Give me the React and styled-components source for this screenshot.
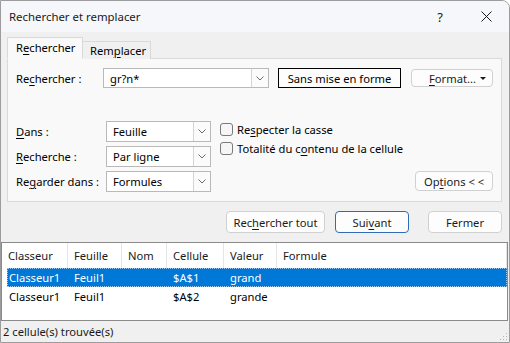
import styled, { createGlobalStyle } from 'styled-components'

const GlobalStyle = createGlobalStyle`
  html, body {
    margin: 0;
    padding: 0;
    background: #ffffff;
  }
  body {
    font-family: "Segoe UI", "Noto Sans", "Open Sans", sans-serif;
    font-size: 11.2px;
    color: #000000;
  }
  * { box-sizing: border-box; }
`

const Window = styled.div`
  width: 510px;
  height: 343px;
  display: flex;
  flex-direction: column;
  border: 1px solid #9c9c9c;
  border-top-right-radius: 8px;
  background: #f0f0f0;
  overflow: hidden;
`

const TitleBar = styled.div`
  height: 31px;
  flex: none;
  display: flex;
  align-items: center;
  padding-left: 8px;
  background: #f5f7fa;
`

const Title = styled.div`
  flex: 1;
  font-size: 11.4px;
  color: #1a1a1a;
`

const TitleButton = styled.div`
  width: 46px;
  height: 31px;
  display: flex;
  align-items: center;
  justify-content: center;
  font-size: 13px;
  color: #1a1a1a;
`

const Content = styled.div`
  padding: 6px 7px 0 6px;
`

const TabStrip = styled.div`
  display: flex;
  align-items: flex-end;
  height: 21px;
  margin-bottom: -1px;
  position: relative;
  z-index: 1;
`

const Tab = styled.div`
  height: ${p => (p.$active ? '22px' : '18px')};
  width: ${p => p.$width}px;
  display: flex;
  align-items: center;
  padding-left: ${p => (p.$active ? '8px' : '7px')};
  border: 1px solid #d9d9d9;
  border-left: ${p => (p.$active ? '1px solid #d9d9d9' : 'none')};
  border-bottom: ${p => (p.$active ? '1px solid #f9f9f9' : 'none')};
  background: ${p => (p.$active ? '#f9f9f9' : '#f0f0f0')};
  padding-bottom: ${p => (p.$active ? '2px' : '0')};
  white-space: nowrap;
`

const Panel = styled.div`
  border: 1px solid #d9d9d9;
  background: #f9f9f9;
  padding: 9px 8px 9px 8px;
`

const FindRow = styled.div`
  display: flex;
  align-items: center;
  height: 20px;
`

const Label = styled.div`
  width: ${p => p.$width || 87}px;
  flex: none;
  white-space: nowrap;
`

const Key = styled.span`
  text-decoration: underline;
  text-underline-offset: 2px;
`

const Text = styled.span`
  white-space: nowrap;
`

const Combo = styled.div`
  width: ${p => p.$width}px;
  height: ${p => p.$height || 21}px;
  flex: none;
  display: flex;
  align-items: stretch;
  background: #ffffff;
  border: 1px solid #b9b9b9;
`

const ComboText = styled.div`
  flex: 1;
  display: flex;
  align-items: center;
  padding-left: 6px;
  overflow: hidden;
  white-space: nowrap;
`

const ComboArrow = styled.div`
  width: 17px;
  flex: none;
  display: flex;
  align-items: center;
  justify-content: center;
  border-left: 1px solid #d4d4d4;
  background: #fbfbfb;
`

const Button = styled.div`
  width: ${p => p.$width}px;
  height: ${p => p.$height || 22}px;
  flex: none;
  display: flex;
  align-items: center;
  justify-content: center;
  background: #fdfdfd;
  border: 1px solid ${p => (p.$focus ? '#2f6cb3' : '#d0d0d0')};
  border-radius: 4px;
  margin-left: ${p => p.$gap || 0}px;
  color: #1a1a1a;
  white-space: nowrap;
`

const PlainButton = styled.div`
  width: 123px;
  height: 20px;
  flex: none;
  margin-left: 9px;
  display: flex;
  align-items: center;
  justify-content: center;
  background: #fdfdfd;
  border: 1px solid #000000;
  white-space: nowrap;
`

const FormatButton = styled(Button)`
  justify-content: flex-start;
  padding-left: 17px;
  position: relative;
`

const DropMark = styled.span`
  position: absolute;
  right: 6px;
  top: 7px;
  width: 0;
  height: 0;
  border-left: 3px solid transparent;
  border-right: 3px solid transparent;
  border-top: 3px solid #1a1a1a;
`

const OptionsArea = styled.div`
  display: flex;
  margin-top: 33px;
`

const OptionGrid = styled.div`
  display: grid;
  grid-template-columns: 90px 105px;
  row-gap: 4px;
  align-items: center;
`

const CheckColumn = styled.div`
  display: flex;
  flex-direction: column;
  margin-left: 9px;
  margin-top: -1px;
`

const CheckRow = styled.div`
  display: flex;
  align-items: center;
  height: 19px;
  white-space: nowrap;
`

const CheckBox = styled.div`
  width: 13px;
  height: 13px;
  flex: none;
  border: 1px solid #7a7a7a;
  border-radius: 3px;
  background: #f6f6f6;
  margin-right: 4px;
`

const OptionsButton = styled(Button)`
  margin-left: auto;
  align-self: flex-end;
  margin-bottom: 1px;
`

const ActionRow = styled.div`
  display: flex;
  justify-content: flex-end;
  margin-top: 9px;
`

const ResultList = styled.div`
  margin: 9px 1px 0 0;
  height: 79px;
  flex: none;
  background: #ffffff;
  border: 1px solid #8a8a8a;
`

const HeaderRow = styled.div`
  display: grid;
  grid-template-columns: 66px 54px 45px 57px 53px 1fr;
  height: 25px;
`

const HeaderCell = styled.div`
  display: flex;
  align-items: center;
  padding-left: 6px;
  border-right: 1px solid #e5e5e5;
  color: #1a1a1a;
`

const DataRow = styled.div`
  display: grid;
  grid-template-columns: 61px 54px 45px 57px 53px 1fr;
  height: ${p => (p.$selected ? 19 : 18)}px;
  margin-left: 5px;
  background: ${p => (p.$selected ? '#0078d7' : 'transparent')};
  color: ${p => (p.$selected ? '#ffffff' : '#000000')};
  outline: ${p => (p.$selected ? '1px dotted #9cc7ee' : 'none')};
  outline-offset: -1px;
`

const DataCell = styled.div`
  display: flex;
  align-items: center;
  padding-left: ${p => (p.$first ? 2 : 6)}px;
  white-space: nowrap;
`

const StatusBar = styled.div`
  flex: 1;
  display: flex;
  align-items: center;
  padding-left: 2px;
  position: relative;
  color: #1a1a1a;
`

const Grip = styled.svg`
  position: absolute;
  right: 1px;
  bottom: 1px;
`

const Chevron = () => (
  <svg width="8" height="5" viewBox="0 0 8 5">
    <path d="M0.5 0.5 L4 4 L7.5 0.5" fill="none" stroke="#6b6b6b" strokeWidth="1" />
  </svg>
)

const CloseIcon = () => (
  <svg width="11" height="11" viewBox="0 0 11 11">
    <path d="M0.5 0.5 L10.5 10.5 M10.5 0.5 L0.5 10.5" stroke="#1a1a1a" strokeWidth="1" />
  </svg>
)

const headers = ['Classeur', 'Feuille', 'Nom', 'Cellule', 'Valeur', 'Formule']

const results = [
  ['Classeur1', 'Feuil1', '', '$A$1', 'grand', ''],
  ['Classeur1', 'Feuil1', '', '$A$2', 'grande', '']
]

const options = [
  { label: <><Key>D</Key>ans :</>, value: 'Feuille' },
  { label: <><Key>R</Key>echerche :</>, value: 'Par ligne' },
  { label: <>Re<Key>g</Key>arder dans :</>, value: 'Formules' }
]

export default function App() {
  return (
    <>
      <GlobalStyle />
      <Window>
        <TitleBar>
          <Title>Rechercher et remplacer</Title>
          <TitleButton>?</TitleButton>
          <TitleButton>
            <CloseIcon />
          </TitleButton>
        </TitleBar>

        <Content>
          <TabStrip>
            <Tab $active $width={76}>
              <Text>R<Key>e</Key>chercher</Text>
            </Tab>
            <Tab $width={68}>
              <Text>Rem<Key>p</Key>lacer</Text>
            </Tab>
          </TabStrip>

          <Panel>
            <FindRow>
              <Label>
                Re<Key>c</Key>hercher :
              </Label>
              <Combo $width={166} $height={20}>
                <ComboText>gr?n*</ComboText>
                <ComboArrow>
                  <Chevron />
                </ComboArrow>
              </Combo>
              <PlainButton>Sans mise en forme</PlainButton>
              <FormatButton $width={82} $height={18} $gap={10}>
                <Text><Key>F</Key>ormat...</Text>
                <DropMark />
              </FormatButton>
            </FindRow>

            <OptionsArea>
              <OptionGrid>
                {options.map((o, i) => [
                  <Label key={'l' + i} $width={90}>
                    {o.label}
                  </Label>,
                  <Combo key={'c' + i} $width={105}>
                    <ComboText>{o.value}</ComboText>
                    <ComboArrow>
                      <Chevron />
                    </ComboArrow>
                  </Combo>
                ])}
              </OptionGrid>

              <CheckColumn>
                <CheckRow>
                  <CheckBox />
                  <Text>Re<Key>s</Key>pecter la casse</Text>
                </CheckRow>
                <CheckRow>
                  <CheckBox />
                  <Text>Totalité du c<Key>o</Key>ntenu de la cellule</Text>
                </CheckRow>
              </CheckColumn>

              <OptionsButton $width={78} $height={20}>
                <Text>Op<Key>t</Key>ions &lt; &lt;</Text>
              </OptionsButton>
            </OptionsArea>
          </Panel>

          <ActionRow>
            <Button $width={99}>
              <Text>Rec<Key>h</Key>ercher tout</Text>
            </Button>
            <Button $width={74} $gap={10} $focus>
              <Text>Sui<Key>v</Key>ant</Text>
            </Button>
            <Button $width={74} $gap={19}>
              <Text>Fermer</Text>
            </Button>
          </ActionRow>
        </Content>

        <ResultList>
          <HeaderRow>
            {headers.map(h => (
              <HeaderCell key={h}>{h}</HeaderCell>
            ))}
          </HeaderRow>
          {results.map((r, i) => (
            <DataRow key={i} $selected={i === 0}>
              {r.map((c, j) => (
                <DataCell key={j} $first={j === 0}>
                  {c}
                </DataCell>
              ))}
            </DataRow>
          ))}
        </ResultList>

        <StatusBar>
          2 cellule(s) trouvée(s)
          <Grip width="10" height="10" viewBox="0 0 10 10">
            <g fill="#b5b5b5">
              <rect x="8" y="2" width="1" height="1" />
              <rect x="5" y="5" width="1" height="1" />
              <rect x="8" y="5" width="1" height="1" />
              <rect x="2" y="8" width="1" height="1" />
              <rect x="5" y="8" width="1" height="1" />
              <rect x="8" y="8" width="1" height="1" />
            </g>
          </Grip>
        </StatusBar>
      </Window>
    </>
  )
}
